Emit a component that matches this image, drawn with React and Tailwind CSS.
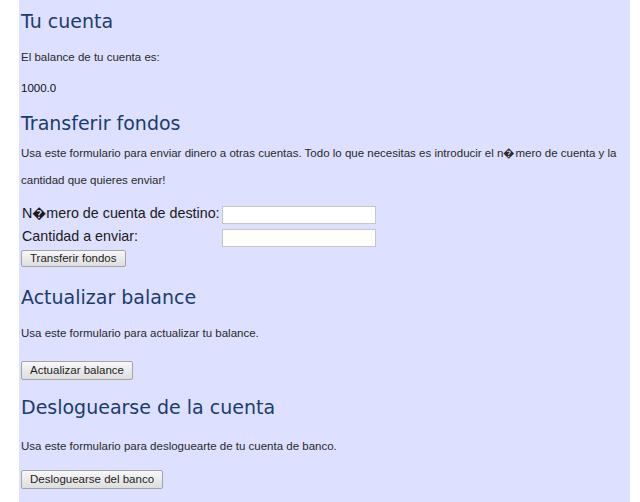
import React from 'react';

const heading = "font-['DejaVu_Sans',sans-serif] text-[19px] leading-[22px] text-[#1b3d6e]";
const para = "font-['Liberation_Sans',Arial,sans-serif] text-[11.5px] leading-[27px] text-[#2a2a2a]";
const button =
  "block font-['Liberation_Sans',Arial,sans-serif] text-[11.5px] leading-none text-[#1e1e1e] border border-[#a4a4a4] rounded-[2px] bg-gradient-to-b from-[#f7f7f7] to-[#dedede] px-[8px]";

function App() {
  return (
    <div className="min-h-[502px] bg-white">
      <div className="ml-[19px] w-[611px] min-h-[502px] bg-[#dde0ff] pl-[2px] pt-[10px] pb-[10px]">
        <h1 className={heading}>Tu cuenta</h1>
        <p className={`${para} mt-[12px]`}>El balance de tu cuenta es:</p>
        <p className={`${para} mt-[4px] text-[#111]`}>1000.0</p>

        <h2 className={`${heading} mt-[10px]`}>Transferir fondos</h2>
        <p className={`${para} mt-[6px]`}>
          Usa este formulario para enviar dinero a otras cuentas. Todo lo que necesitas es introducir el n{'\uFFFD'}mero de cuenta y la cantidad que quieres enviar!
        </p>

        <form className="mt-[12px]" onSubmit={(e) => e.preventDefault()}>
          <div className="grid w-fit grid-cols-[201px_auto] gap-y-[5px] font-['Liberation_Sans',Arial,sans-serif] text-[14.3px] leading-[14px] text-[#1a1a1a]">
            <label className="pl-[1px]">N{'\uFFFD'}mero de cuenta de destino:</label>
            <input type="text" className="h-[18px] w-[154px] border border-[#c6c6c6] bg-white" />
            <label className="pl-[1px]">Cantidad a enviar:</label>
            <input type="text" className="h-[18px] w-[154px] border border-[#c6c6c6] bg-[#fffffa]" />
          </div>
          <button type="submit" className={`${button} mt-[3px] h-[17px]`}>Transferir fondos</button>
        </form>

        <h2 className={`${heading} mt-[19px]`}>Actualizar balance</h2>
        <p className={`${para} mt-[12px]`}>Usa este formulario para actualizar tu balance.</p>
        <button type="button" className={`${button} mt-[14px] h-[19px]`}>Actualizar balance</button>

        <h2 className={`${heading} mt-[16px]`}>Desloguearse de la cuenta</h2>
        <p className={`${para} mt-[15px]`}>Usa este formulario para desloguearte de tu cuenta de banco.</p>
        <button type="button" className={`${button} mt-[10px] h-[19px]`}>Desloguearse del banco</button>
      </div>
    </div>
  );
}

export default App;
